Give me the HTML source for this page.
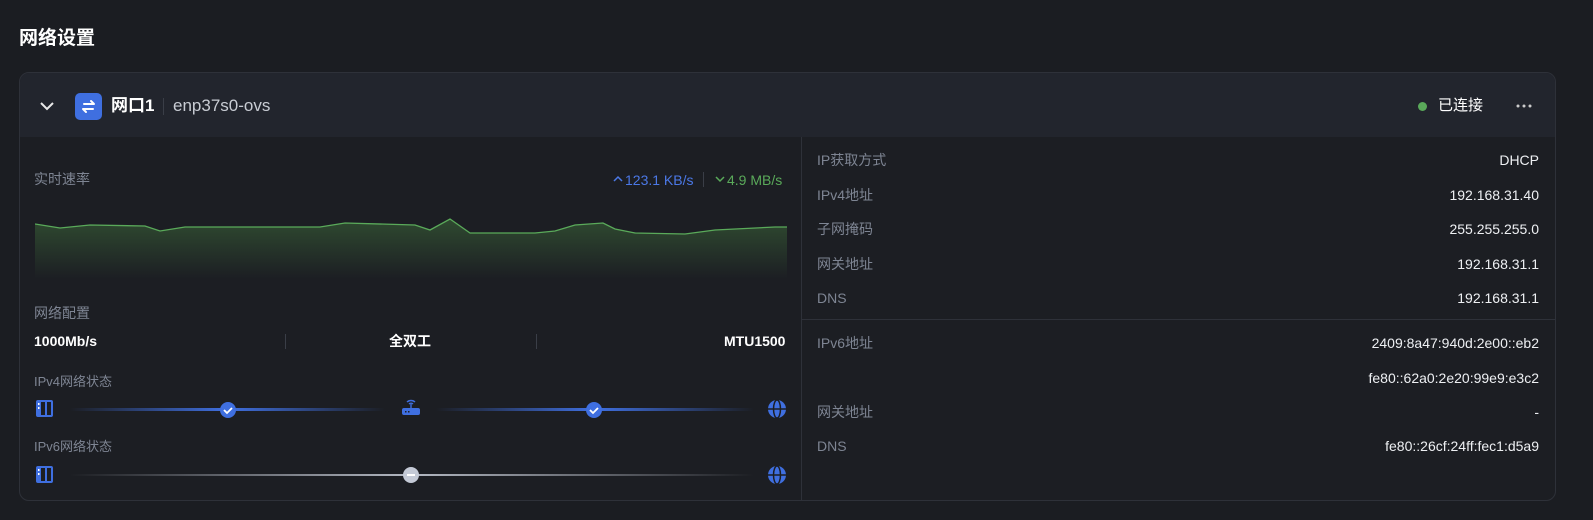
<!DOCTYPE html>
<html><head><meta charset="utf-8"><style>
*{margin:0;padding:0;box-sizing:border-box}
body{width:1593px;height:520px;background:#1b1d22;font-family:"Liberation Sans","Noto Sans CJK SC",sans-serif;color:#e6e8ec;position:relative;overflow:hidden}
.a{position:absolute;white-space:nowrap;line-height:20px}
.title{left:19px;top:27px;font-size:19px;font-weight:bold;color:#fff;line-height:24px}
.card{left:19px;top:72px;width:1537px;height:429px;border:1px solid #2e3139;border-radius:10px;background:#1c1e23;overflow:hidden}
.hdr{left:0;top:0;width:1535px;height:64px;background:#22252d}
.lbl{font-size:14px;color:#7e8593}
.val{font-size:14px;color:#eef0f3;text-align:right}
.b{font-size:14px;font-weight:bold;color:#fff}
</style></head><body>
<div class="a title">网络设置</div>
<div class="a card">
 <div class="a hdr">
  <svg class="a" style="left:19px;top:27px" width="16" height="12" viewBox="0 0 16 12"><path d="M2 3l6 6 6-6" stroke="#e8e8e8" stroke-width="2" fill="none"/></svg>
  <div class="a" style="left:55px;top:20px;width:27px;height:27px;background:#3f6fe0;border-radius:5px"></div>
  <svg class="a" style="left:55px;top:20px" width="27" height="27" viewBox="0 0 27 27"><path d="M9 11h10l-3-3M18 16H8l3 3" stroke="#fff" stroke-width="2" fill="none" stroke-linecap="round" stroke-linejoin="round"/></svg>
  <div class="a" style="left:91px;top:22px;font-size:17px;font-weight:bold;color:#fff;line-height:22px">网口1</div>
  <div class="a" style="left:143px;top:25px;width:1px;height:17px;background:#3a3e47"></div>
  <div class="a" style="left:153px;top:22px;font-size:17px;color:#c8ccd3;line-height:22px">enp37s0-ovs</div>
  <div class="a" style="left:1398px;top:29px;width:9px;height:9px;border-radius:50%;background:#5aa95a"></div>
  <div class="a" style="left:1418px;top:23px;font-size:15px;color:#fff">已连接</div>
  <svg class="a" style="left:1496px;top:31px" width="16" height="4" viewBox="0 0 16 4"><circle cx="2" cy="2" r="1.5" fill="#ccc"/><circle cx="8" cy="2" r="1.5" fill="#ccc"/><circle cx="14" cy="2" r="1.5" fill="#ccc"/></svg>
 </div>
 <div class="a" style="left:781px;top:64px;width:1px;height:365px;background:#2e3139"></div>
 <div class="a lbl" style="left:14px;top:96px">实时速率</div>
 <svg class="a" style="left:593px;top:102px" width="10" height="8" viewBox="0 0 10 8"><path d="M1 6l4-4 4 4" stroke="#4b78e6" stroke-width="1.5" fill="none"/></svg>
 <div class="a" style="left:605px;top:97px;font-size:14px;color:#4b78e6">123.1 KB/s</div>
 <div class="a" style="left:683px;top:99px;width:1px;height:15px;background:#3a3e47"></div>
 <svg class="a" style="left:695px;top:102px" width="10" height="8" viewBox="0 0 10 8"><path d="M1 2l4 4 4-4" stroke="#5aaa5a" stroke-width="1.5" fill="none"/></svg>
 <div class="a" style="left:707px;top:97px;font-size:14px;color:#5aaa5a">4.9 MB/s</div>
 <svg class="a" style="left:15px;top:140px" width="752" height="66" viewBox="0 0 752 66">
  <defs><linearGradient id="g" x1="0" y1="0" x2="0" y2="1"><stop offset="0" stop-color="#2f4a30"/><stop offset="1" stop-color="#1c1e23"/></linearGradient></defs>
  <path d="M0 11 L25 15 L55 12 L110 13 L125 18 L150 14 L285 14 L310 10 L380 12 L395 17 L415 6 L435 20 L480 20 L500 20 L520 18 L540 12 L568 10 L580 16 L600 20 L650 21 L680 17 L740 14 L752 14 L752 66 L0 66Z" fill="url(#g)"/>
  <path d="M0 11 L25 15 L55 12 L110 13 L125 18 L150 14 L285 14 L310 10 L380 12 L395 17 L415 6 L435 20 L480 20 L500 20 L520 18 L540 12 L568 10 L580 16 L600 20 L650 21 L680 17 L740 14 L752 14" fill="none" stroke="#5aaa5a" stroke-width="1.3"/>
 </svg>
 <div class="a lbl" style="left:14px;top:230px">网络配置</div>
 <div class="a b" style="left:14px;top:258px">1000Mb/s</div>
 <div class="a" style="left:265px;top:261px;width:1px;height:15px;background:#3a3e47"></div>
 <div class="a b" style="left:369px;top:258px">全双工</div>
 <div class="a" style="left:516px;top:261px;width:1px;height:15px;background:#3a3e47"></div>
 <div class="a b" style="left:704px;top:258px">MTU1500</div>
 <div class="a lbl" style="left:14px;top:299px;font-size:13px">IPv4网络状态</div>
 <svg class="a" style="left:15px;top:326px" width="20" height="20" viewBox="0 0 20 20"><rect x="1" y="1" width="17" height="17" rx="2" fill="#3f6fe0"/><rect x="6" y="3" width="4" height="13" fill="#1c1e23"/><rect x="12" y="3" width="4" height="13" fill="#1c1e23"/><rect x="3" y="4" width="1.5" height="2" fill="#fff"/><rect x="3" y="8" width="1.5" height="2" fill="#fff"/></svg>
 <div class="a" style="left:50px;top:335px;width:315px;height:3px;background:linear-gradient(90deg,rgba(63,111,224,0),#3f6fe0 50%,rgba(63,111,224,0))"></div>
 <div class="a" style="left:416px;top:335px;width:318px;height:3px;background:linear-gradient(90deg,rgba(63,111,224,0),#3f6fe0 50%,rgba(63,111,224,0))"></div>
 <svg class="a" style="left:199px;top:328px" width="18" height="18" viewBox="0 0 18 18"><circle cx="9" cy="9" r="8" fill="#3f6fe0"/><path d="M5 9l3 3 5-5" stroke="#fff" stroke-width="1.8" fill="none"/></svg>
 <svg class="a" style="left:565px;top:328px" width="18" height="18" viewBox="0 0 18 18"><circle cx="9" cy="9" r="8" fill="#3f6fe0"/><path d="M5 9l3 3 5-5" stroke="#fff" stroke-width="1.8" fill="none"/></svg>
 <svg class="a" style="left:381px;top:324px" width="20" height="20" viewBox="0 0 20 20"><path d="M6 5a6 6 0 0 1 8 0M8 7a3 3 0 0 1 4 0" stroke="#3f6fe0" stroke-width="1.5" fill="none"/><rect x="9.3" y="7" width="1.4" height="5" fill="#3f6fe0"/><rect x="1" y="11" width="18" height="7" rx="2" fill="#3f6fe0"/><rect x="4" y="14" width="1.5" height="1.5" fill="#1c1e23"/><rect x="7" y="14" width="1.5" height="1.5" fill="#1c1e23"/></svg>
 <svg class="a" style="left:747px;top:326px" width="20" height="20" viewBox="0 0 20 20"><circle cx="10" cy="10" r="9" fill="#3f6fe0"/><ellipse cx="10" cy="10" rx="3.5" ry="9" fill="none" stroke="#1c1e23" stroke-width="1.5"/><path d="M1 10h18" stroke="#1c1e23" stroke-width="1.5"/></svg>
 <div class="a lbl" style="left:14px;top:364px;font-size:13px">IPv6网络状态</div>
 <svg class="a" style="left:15px;top:392px" width="20" height="20" viewBox="0 0 20 20"><rect x="1" y="1" width="17" height="17" rx="2" fill="#3f6fe0"/><rect x="6" y="3" width="4" height="13" fill="#1c1e23"/><rect x="12" y="3" width="4" height="13" fill="#1c1e23"/><rect x="3" y="4" width="1.5" height="2" fill="#fff"/><rect x="3" y="8" width="1.5" height="2" fill="#fff"/></svg>
 <div class="a" style="left:50px;top:401px;width:684px;height:2px;background:linear-gradient(90deg,rgba(180,185,195,0),#b4b9c3 50%,rgba(180,185,195,0))"></div>
 <svg class="a" style="left:382px;top:393px" width="18" height="18" viewBox="0 0 18 18"><circle cx="9" cy="9" r="8" fill="#c4cad6"/><path d="M5 9h8" stroke="#fff" stroke-width="2"/></svg>
 <svg class="a" style="left:747px;top:392px" width="20" height="20" viewBox="0 0 20 20"><circle cx="10" cy="10" r="9" fill="#3f6fe0"/><ellipse cx="10" cy="10" rx="3.5" ry="9" fill="none" stroke="#1c1e23" stroke-width="1.5"/><path d="M1 10h18" stroke="#1c1e23" stroke-width="1.5"/></svg>

 <div class="a lbl" style="left:797px;top:77px">IP获取方式</div><div class="a val" style="right:16px;top:77px">DHCP</div>
 <div class="a lbl" style="left:797px;top:112px">IPv4地址</div><div class="a val" style="right:16px;top:112px">192.168.31.40</div>
 <div class="a lbl" style="left:797px;top:146px">子网掩码</div><div class="a val" style="right:16px;top:146px">255.255.255.0</div>
 <div class="a lbl" style="left:797px;top:181px">网关地址</div><div class="a val" style="right:16px;top:181px">192.168.31.1</div>
 <div class="a lbl" style="left:797px;top:215px">DNS</div><div class="a val" style="right:16px;top:215px">192.168.31.1</div>
 <div class="a" style="left:782px;top:246px;width:754px;height:1px;background:#2e3139"></div>
 <div class="a lbl" style="left:797px;top:260px">IPv6地址</div><div class="a val" style="right:16px;top:260px">2409:8a47:940d:2e00::eb2</div>
 <div class="a val" style="right:16px;top:295px">fe80::62a0:2e20:99e9:e3c2</div>
 <div class="a lbl" style="left:797px;top:329px">网关地址</div><div class="a val" style="right:16px;top:329px">-</div>
 <div class="a lbl" style="left:797px;top:363px">DNS</div><div class="a val" style="right:16px;top:363px">fe80::26cf:24ff:fec1:d5a9</div>
</div>
</body></html>
